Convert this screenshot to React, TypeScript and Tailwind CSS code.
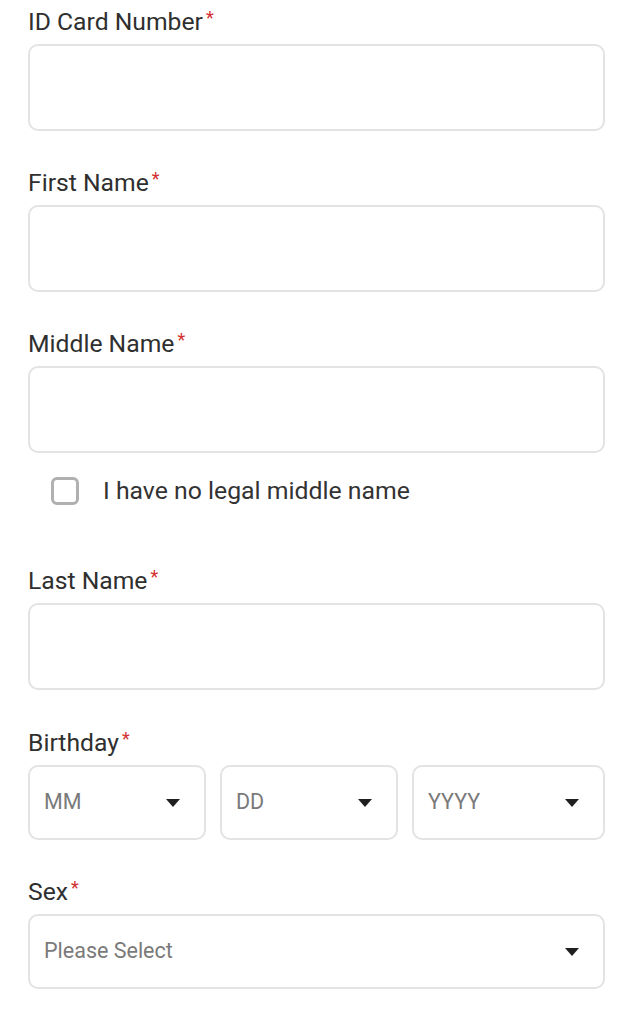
import React from "react";

const Caret = () => (
  <svg width="14" height="8" viewBox="0 0 14 8" className="shrink-0">
    <path d="M0 0 H14 L7 8 Z" fill="#1f1f1f" />
  </svg>
);

const Label = ({ text }: { text: string }) => (
  <div className="flex items-start text-[24.7px] leading-[28px] text-[#2f2f2f]">
    <span>{text}</span>
    <span className="ml-[3px] text-[18px] leading-[20px] text-[#d32f2f]">*</span>
  </div>
);

const TextField = ({ label }: { label: string }) => (
  <div className="flex flex-col gap-[8px]">
    <Label text={label} />
    <div className="h-[87px] rounded-[10px] border-2 border-[#e3e3e3] bg-white" />
  </div>
);

const Select = ({ placeholder, className }: { placeholder: string; className?: string }) => (
  <div
    className={
      "flex h-[75px] items-center justify-between rounded-[10px] border-2 border-[#e3e3e3] bg-white pl-[14px] pr-[24px] " +
      (className ?? "")
    }
  >
    <span className="text-[21.5px] text-[#7a7a7a]">{placeholder}</span>
    <Caret />
  </div>
);

export default function App() {
  return (
    <div
      className="min-h-screen bg-white px-[28px] pt-[8px]"
      style={{ fontFamily: "Roboto, 'Noto Sans', sans-serif" }}
    >
      <div className="flex flex-col">
        <div className="mb-[38px]">
          <TextField label="ID Card Number" />
        </div>
        <div className="mb-[38px]">
          <TextField label="First Name" />
        </div>
        <TextField label="Middle Name" />
        <label className="flex h-[76px] items-center gap-[24px] pl-[23px]">
          <span className="h-[28px] w-[28px] rounded-[6px] border-[3px] border-[#b0b0b0] bg-white" />
          <span className="text-[24.8px] text-[#333333]">I have no legal middle name</span>
        </label>
        <div className="mt-[38px] mb-[39px]">
          <TextField label="Last Name" />
        </div>
        <div className="mb-[38px] flex flex-col gap-[8px]">
          <Label text="Birthday" />
          <div className="flex gap-[14px]">
            <Select placeholder="MM" className="w-[178px]" />
            <Select placeholder="DD" className="w-[178px]" />
            <Select placeholder="YYYY" className="flex-1" />
          </div>
        </div>
        <div className="flex flex-col gap-[8px]">
          <Label text="Sex" />
          <Select placeholder="Please Select" />
        </div>
      </div>
    </div>
  );
}
